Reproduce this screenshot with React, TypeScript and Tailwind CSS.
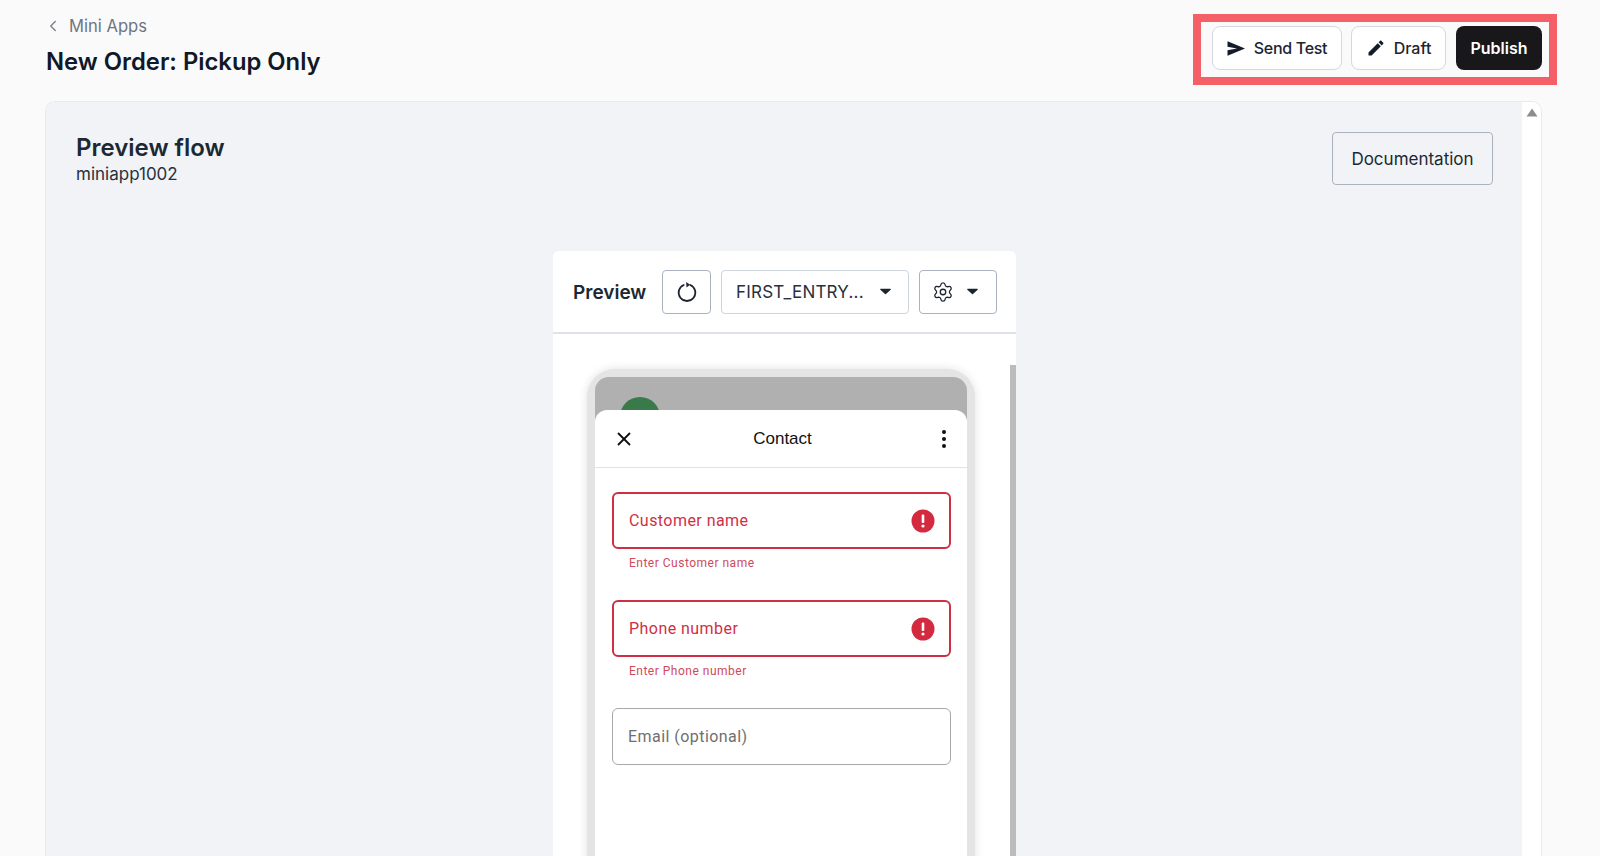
import { ChevronLeft, Settings, X } from 'lucide-react';

function Caret({ className = '' }: { className?: string }) {
  return (
    <svg width="11" height="7" viewBox="0 0 12 7" className={className}>
      <path d="M0.8 0.5h10.4a0.6 0.6 0 0 1 .45 1L6.5 6.3a0.7 0.7 0 0 1-1 0L.35 1.5a0.6 0.6 0 0 1 .45-1z" fill="#1c2430" />
    </svg>
  );
}

function ErrorIcon() {
  return (
    <svg width="24" height="24" viewBox="0 0 24 24">
      <circle cx="12" cy="12" r="11.5" fill="#d42a40" />
      <rect x="10.7" y="5.5" width="2.6" height="8.5" rx="1" fill="#fff" />
      <circle cx="12" cy="17" r="1.6" fill="#fff" />
    </svg>
  );
}

function Field({ label, error }: { label: string; error?: string }) {
  return (
    <div className={error ? 'h-[107px]' : 'h-[57px]'}>
      <div
        className={`h-[57px] flex items-center justify-between pl-[15px] pr-[14px] rounded-[6px] bg-white ${
          error ? 'border-2 border-[#cf2f45] text-[#cf2f45]' : 'border-[1.5px] border-[#a8a8a8] text-[#6f6f6f]'
        }`}
      >
        <span className="text-[16px] tracking-[0.45px]">{label}</span>
        {error && <ErrorIcon />}
      </div>
      {error && <div className="mt-[6px] pl-[17px] text-[12px] leading-[16px] tracking-[0.5px] text-[#cf4a5c]">{error}</div>}
    </div>
  );
}

function PhoneMock() {
  return (
    <div className="ml-[34px] w-[388px] rounded-t-[28px] bg-[#e4e4e4] px-[8px] pt-[8px] shadow-[0_0_10px_rgba(0,0,0,0.12)] font-['Roboto',sans-serif] h-[500px]">
      <div className="h-[50px] rounded-t-[14px] bg-[#b0b0b0] overflow-hidden pl-[25px] pt-[20px]">
        <div className="w-[40px] h-[40px] rounded-full bg-[#3a7a4a]" />
      </div>
      <div className="-mt-[17px] relative h-[470px] rounded-t-[12px] bg-white">
        <div className="h-[58px] flex items-center justify-between pl-[18px] pr-[15px] border-b border-[#e2e2e2]">
          <div className="w-[24px]">
            <X size={22} strokeWidth={2} className="text-[#111]" />
          </div>
          <span className="font-['Liberation_Sans',sans-serif] text-[17px] text-[#111]">Contact</span>
          <div className="w-[24px] flex justify-end">
            <svg width="16" height="20" viewBox="0 0 16 20">
              <circle cx="8" cy="3" r="2" fill="#111" />
              <circle cx="8" cy="10" r="2" fill="#111" />
              <circle cx="8" cy="17" r="2" fill="#111" />
            </svg>
          </div>
        </div>
        <div className="pl-[17px] pr-[16px] pt-[24px] flex flex-col gap-[1px]">
          <Field label="Customer name" error="Enter Customer name" />
          <Field label="Phone number" error="Enter Phone number" />
          <Field label="Email (optional)" />
        </div>
      </div>
    </div>
  );
}

export default function App() {
  return (
    <div className="h-[856px] overflow-hidden bg-[#fafafa] font-['Inter',sans-serif]">
      <header className="h-[101px] flex justify-between pl-[46px] pr-[43px] pt-[14px]">
        <div>
          <div className="flex items-center gap-[7px] -ml-[2px] h-[24px] text-[16.6px] text-[#6f7580]">
            <ChevronLeft size={18} strokeWidth={2} className="text-[#7d838d]" />
            <span className="pt-[1px]">Mini Apps</span>
          </div>
          <h1 className="mt-[8px] text-[23.8px] leading-[32px] font-semibold text-[#111827]">New Order: Pickup Only</h1>
        </div>
        <div className="w-[364px] h-[71px] border-[8px] border-[#f46067] flex items-center pl-[11px] pb-[3px]">
          <button className="w-[130px] h-[44px] flex items-center justify-center gap-[9px] rounded-[8px] border border-[#d5d8de] bg-white text-[16px] font-medium tracking-[-0.3px] text-[#1c2430]">
            <svg width="18" height="15" viewBox="0 0 18 15">
              <path d="M0.5 0.2L18 7.5L0.5 14.8V9.3L10 7.5L0.5 5.7z" fill="#141c2b" />
            </svg>
            Send Test
          </button>
          <button className="ml-[9px] w-[95px] h-[44px] flex items-center justify-center gap-[8px] rounded-[8px] border border-[#d5d8de] bg-white text-[16px] font-medium text-[#1c2430]">
            <svg width="20" height="20" viewBox="0 0 24 24">
              <path
                d="M3 17.25V21h3.75L17.81 9.94l-3.75-3.75L3 17.25zM20.71 7.04c.39-.39.39-1.02 0-1.41l-2.34-2.34c-.39-.39-1.02-.39-1.41 0l-1.83 1.83 3.75 3.75 1.83-1.83z"
                fill="#141c2b"
              />
            </svg>
            Draft
          </button>
          <button className="ml-[10px] w-[86px] h-[44px] rounded-[8px] bg-[#18181b] text-[16px] font-semibold text-white">Publish</button>
        </div>
      </header>

      <main className="ml-[45px] mr-[58px] h-[755px] flex rounded-t-[10px] border border-b-0 border-[#e8eaee] overflow-hidden">
        <div className="flex-1 bg-[#f1f3f7] pl-[30px] pr-[29px] pt-[30px]">
          <div className="flex justify-between">
            <div>
              <h2 className="text-[24px] leading-[32px] font-semibold text-[#1c2833]">Preview flow</h2>
              <div className="text-[17px] leading-[22px] -mt-[1px] text-[#27313c]">miniapp1002</div>
            </div>
            <button className="w-[161px] h-[53px] pt-[2px] rounded-[4px] border border-[#a9b2bf] text-[17px] text-[#1c2833]">Documentation</button>
          </div>

          <section className="ml-[477px] mt-[66px] w-[463px] h-[700px] rounded-t-[6px] bg-white">
            <div className="h-[83px] flex items-center pl-[20px] border-b-2 border-[#dfe3e8]">
              <span className="w-[89px] pt-[3px] text-[19px] font-semibold text-[#1c2833]">Preview</span>
              <button className="w-[49px] h-[44px] flex items-center justify-center rounded-[4px] border border-[#a9b2bf] mr-[10px]">
                <svg width="22" height="22" viewBox="0 0 20 20" fill="none">
                  <path d="M7 3.6A7.6 7.6 0 1 0 13 3.6" stroke="#1c2430" strokeWidth="1.6" strokeLinecap="round" />
                  <path d="M9.2 0.8L12.8 3.4L9.6 6" fill="#1c2430" />
                </svg>
              </button>
              <div className="w-[188px] h-[44px] flex items-center justify-between pl-[14px] pr-[17px] rounded-[4px] border border-[#ced4dc] text-[17px] text-[#27313c] tracking-[0.2px] mr-[10px]">
                <span className="pt-[3px]">FIRST_ENTRY...</span>
                <Caret />
              </div>
              <button className="w-[78px] h-[44px] flex items-center gap-[13px] pl-[12px] rounded-[4px] border border-[#a9b2bf]">
                <Settings size={22} strokeWidth={1.4} className="text-[#1c2430]" />
                <Caret />
              </button>
            </div>
            <div className="relative pt-[35px]">
              <PhoneMock />
              <div className="absolute right-0 top-[31px] w-[6px] h-[600px] bg-[#bcbcbc]" />
            </div>
          </section>
        </div>
        <div className="w-[19px] bg-white flex justify-center pt-[6px]">
          <svg width="12" height="9" viewBox="0 0 12 9">
            <path d="M6 0.5L11.5 8.5H0.5z" fill="#8d8d8d" />
          </svg>
        </div>
      </main>
    </div>
  );
}
